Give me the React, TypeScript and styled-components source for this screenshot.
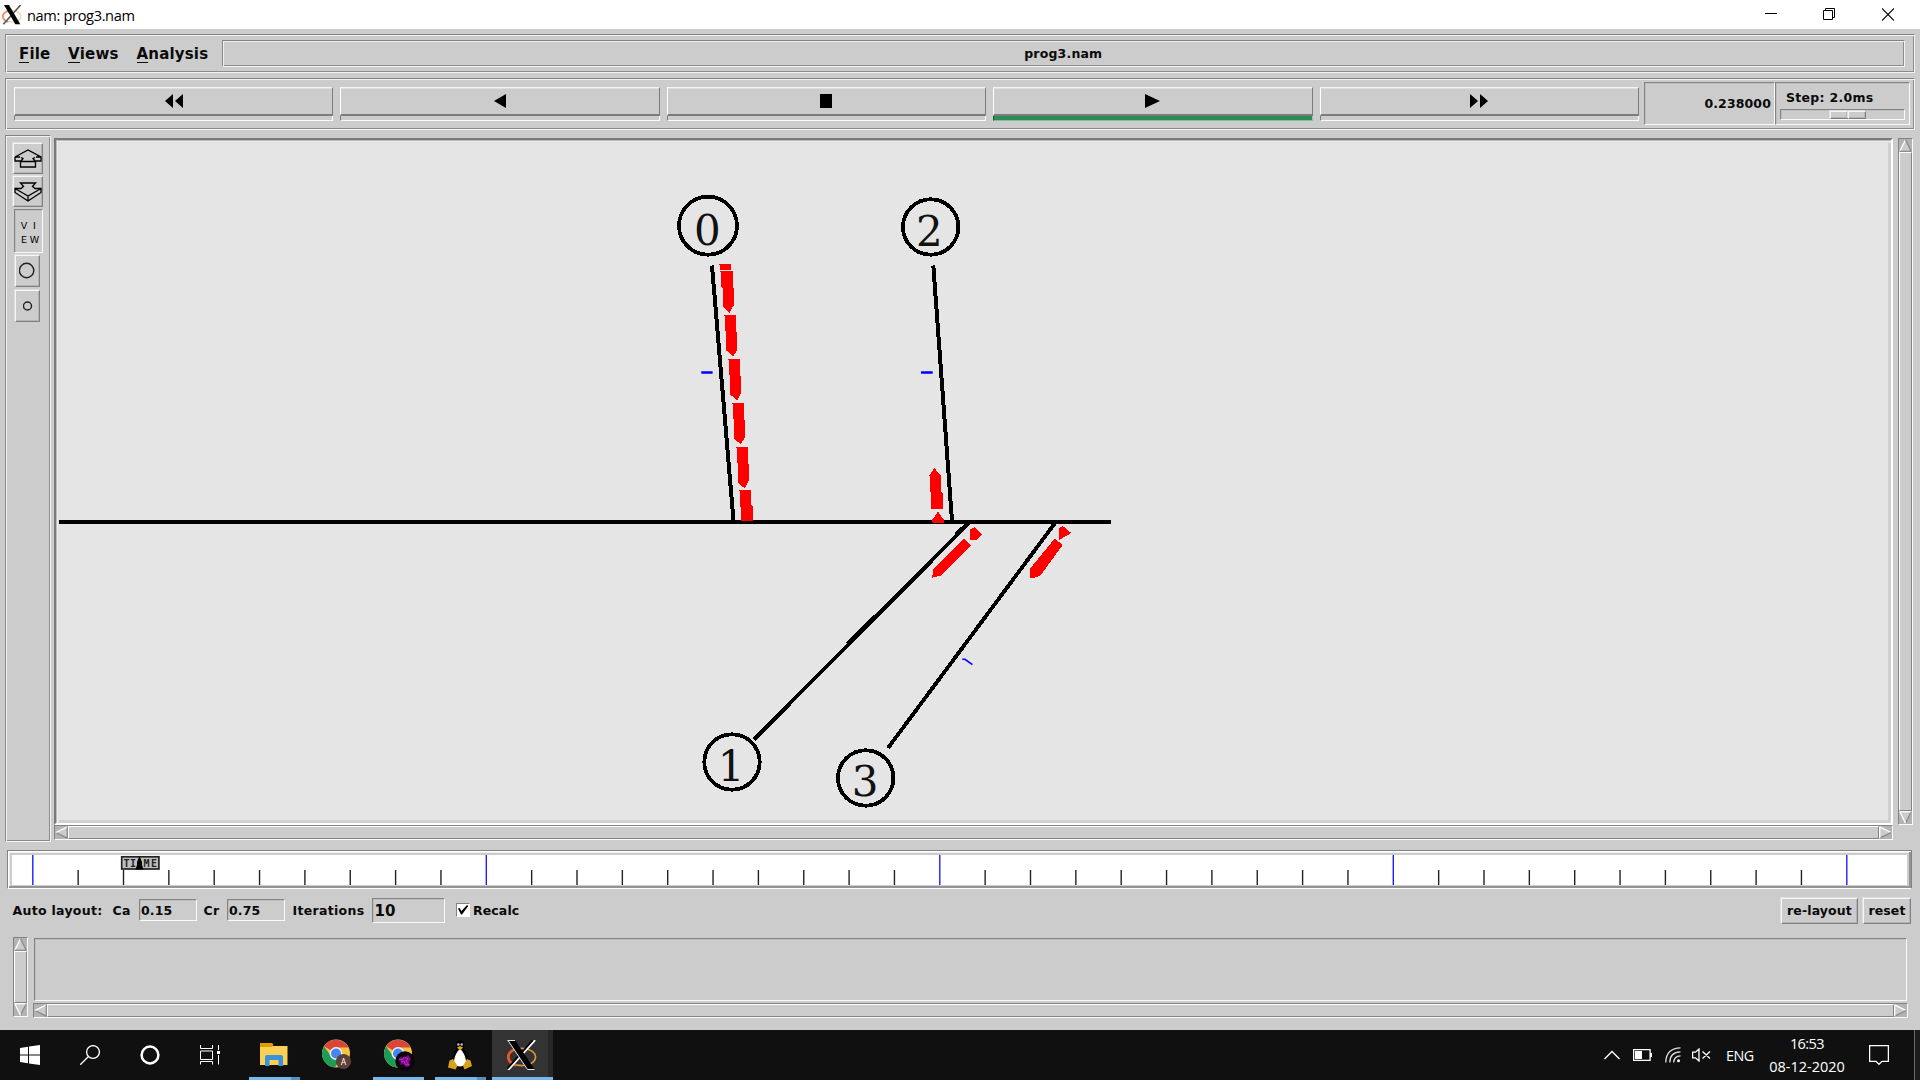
import React from "react";
import styled, { createGlobalStyle, css } from "styled-components";

const Global = createGlobalStyle`
  * { box-sizing: border-box; }
  html, body { margin: 0; padding: 0; overflow: hidden; background: #ccc; }
`;

const groove = css`
  border: 1px solid;
  border-color: #838383 #f4f4f4 #f4f4f4 #8a8a8a;
  box-shadow: inset 1px 1px #f0f0f0, inset -1px -1px #8c8c8c;
`;
const sunken = css`
  border: 1px solid;
  border-color: #838383 #fafafa #fafafa #838383;
  box-shadow: inset 1px 1px #bdbdbd;
`;
const raised = css`
  border: 1px solid;
  border-color: #f6f6f6 #808080 #808080 #f6f6f6;
  box-shadow: inset -1px -1px #b4b4b4, -1px -1px #dedede;
`;

const Screen = styled.div`
  width: 1920px;
  height: 1080px;
  display: flex;
  flex-direction: column;
  background: #ccc;
  color: #0a0a0a;
  font: bold 12.5px "DejaVu Sans", sans-serif;
  white-space: nowrap;
`;
const TitleBar = styled.header`
  height: 29px;
  flex: none;
  display: flex;
  align-items: center;
  background: #fff;
  padding-left: 2px;
  font: 14.6px "Open Sans", "Noto Sans", sans-serif;
  color: #000;
`;
const Caption = styled.span`
  margin-left: 5px;
  flex: 1;
  letter-spacing: -0.35px;
`;
const WindowButtons = styled.div`
  display: flex;
  gap: 47px;
  padding-right: 26px;
`;
const Client = styled.main`
  height: 1001px;
  flex: none;
  display: flex;
  flex-direction: column;
  padding: 5px 5px 0;
`;
const MenuBar = styled.nav`
  ${groove}
  height: 39px;
  display: flex;
  align-items: center;
  padding: 0 9px 0 13px;
  font-size: 15px;
  letter-spacing: 0.18px;
`;
const MenuItem = styled.span<{ $w: number }>`
  width: ${(p) => p.$w}px;
  flex: none;
`;
const Mnemonic = styled.span`
  box-shadow: 0 1px #111;
  display: inline-block;
  line-height: 16px;
`;
const FileName = styled.div`
  ${groove}
  flex: 1;
  height: 27px;
  display: flex;
  align-items: center;
  justify-content: center;
  font-size: 12.5px;
`;
const ControlBar = styled.section`
  ${groove}
  height: 52px;
  margin-top: 5px;
  display: flex;
  padding: 3px 4px 3px 8px;
`;
const Transport = styled.div`
  width: 1625px;
  flex: none;
  display: grid;
  grid-template-columns: repeat(5, 1fr);
  gap: 7px;
  padding-top: 5px;
`;
const TransportCell = styled.div`
  height: 34px;
  display: flex;
  flex-direction: column;
`;
const TransportButton = styled.div`
  height: 29px;
  display: flex;
  align-items: center;
  justify-content: center;
  border: 1px solid;
  border-color: #f4f4f4 #7c7c7c #7c7c7c #fff;
  border-bottom: 2px solid #7c7c7c;
  box-shadow: inset 0 1px #dedede;
`;
const Indicator = styled.div<{ $on?: boolean }>`
  height: 5px;
  background: ${(p) => (p.$on ? "#2e8b57" : "#ccc")};
  border: 1px solid;
  border-top: 0;
  border-color: ${(p) => (p.$on ? "#2e8b57 #8ecfa8 #7fc19a #1d5c39" : "#ccc #fff #fafafa #7c7c7c")};
`;
const Clock = styled.div`
  ${sunken}
  width: 131px;
  flex: none;
  height: 43px;
  margin-left: 5px;
  padding: 0 3px 0 0;
  display: flex;
  align-items: center;
  justify-content: flex-end;
  letter-spacing: 0.12px;
`;
const StepBox = styled.div`
  ${sunken}
  width: 135px;
  flex: none;
  height: 43px;
  padding: 7px 4px 0;
`;
const StepLabel = styled.div`
  padding-left: 6px;
  line-height: 16px;
  margin-bottom: 3px;
  letter-spacing: 0.28px;
`;
const Trough = styled.div`
  ${sunken}
  width: 125px;
  height: 11px;
  display: flex;
  padding: 1px 0 0 49px;
`;
const ThumbHalf = styled.div`
  ${raised}
  width: 18px;
  height: 8px;
`;
const Workspace = styled.section`
  height: 707px;
  margin-top: 5px;
  display: flex;
`;
const ToolColumn = styled.aside`
  ${groove}
  width: 46px;
  display: flex;
  flex-direction: column;
  align-items: center;
  padding: 7px 0 0 0;
`;
const Tool = styled.div<{ $w: number; $h: number; $gap: number; $shift?: number; $in?: boolean }>`
  ${(p) => (p.$in ? sunken : raised)}
  width: ${(p) => p.$w}px;
  height: ${(p) => p.$h}px;
  margin-bottom: ${(p) => p.$gap}px;
  margin-right: ${(p) => p.$shift ?? 0}px;
  display: flex;
  align-items: center;
  justify-content: center;
`;
const ViewWord = styled.div`
  display: grid;
  grid-template-columns: 8px 9px;
  column-gap: 2px;
  justify-items: center;
  font: 9.5px/14px "DejaVu Sans", sans-serif;
  padding: 4px 0 0 3px;
  color: #000;
`;
const Stage = styled.div`
  width: 1839px;
  margin: 3px 0 0 3px;
`;
const CanvasFrame = styled.div`
  height: 687px;
  background: #e5e5e5;
  border: 2px solid;
  border-color: #7a7a7a #fff #fff #7a7a7a;
  box-shadow: inset 1px 1px #bbb, inset 2px 2px #eee, inset 3px 3px #e0e0e0, inset -3px -3px #d0d0d0;
  padding: 3px;
`;
const Network = styled.svg`
  display: block;
  font: 42px "DejaVu Serif", serif;
`;
const ScrollTrack = styled.div<{ $v?: boolean; $len: number }>`
  display: flex;
  flex-direction: ${(p) => (p.$v ? "column" : "row")};
  width: ${(p) => (p.$v ? 15 : p.$len)}px;
  height: ${(p) => (p.$v ? p.$len : 15)}px;
  flex: none;
  background: #b3b3b3;
  border: 1px solid;
  border-color: #838383 #fafafa #fafafa #838383;
`;
const ScrollThumb = styled.div`
  flex: 1;
  background: #ccc;
  border: 1px solid;
  border-color: #fff #838383 #838383 #fff;
`;
const SideScroll = styled.div`
  margin: 3px 0 0 5px;
`;
const Timeline = styled.section`
  width: 1905px;
  height: 39px;
  margin: 8px 0 0 2px;
  border: 1px solid;
  border-color: #838383 #838383 #fff #838383;
  box-shadow: inset 1px 1px #fff, inset -2px -2px #949494, inset 2px 2px #eee;
  padding: 4px 0 0 4px;
  flex: none;
`;
const TimeScale = styled.svg`
  display: block;
  background: #fff;
  font: bold 10px "DejaVu Sans Mono", monospace;
`;
const LayoutRow = styled.section`
  height: 28px;
  margin-top: 7px;
  padding: 0 4px 0 7.5px;
  display: flex;
  align-items: center;
  letter-spacing: 0.12px;
`;
const Label = styled.span<{ $w: number }>`
  width: ${(p) => p.$w}px;
  letter-spacing: 0.3px;
`;
const Field = styled.div<{ $w: number; $big?: boolean; $gap: number }>`
  ${sunken}
  width: ${(p) => p.$w}px;
  height: ${(p) => (p.$big ? 25 : 22)}px;
  font-size: ${(p) => (p.$big ? 15 : 12.5)}px;
  margin-right: ${(p) => p.$gap}px;
  padding: ${(p) => (p.$big ? "1px 0 0 2px" : "0 0 0 1px")};
  display: flex;
  align-items: center;
`;
const CheckBox = styled.div`
  width: 14px;
  height: 14px;
  background: #fff;
  border: 1px solid;
  border-color: #838383 #fff #fff #838383;
  margin-right: 3px;
`;
const Spacer = styled.div`
  flex: 1;
`;
const PushButton = styled.div<{ $w: number }>`
  ${raised}
  width: ${(p) => p.$w}px;
  height: 26px;
  margin: 1px 0 0 5px;
  display: flex;
  align-items: center;
  justify-content: center;
  padding-bottom: 1px;
`;
const Notes = styled.section`
  display: flex;
  margin: 13px 0 0 8px;
  gap: 5px;
`;
const NotesMain = styled.div`
  display: flex;
  flex-direction: column;
  gap: 2px;
`;
const NotesText = styled.div`
  ${sunken}
  width: 1873px;
  height: 63px;
  margin-top: 1px;
  margin-left: 1px;
`;
const TaskBar = styled.footer`
  height: 50px;
  flex: none;
  display: flex;
  background: #101010;
  color: #fff;
  font: 15px "Open Sans", "Noto Sans", sans-serif;
`;
const TaskCell = styled.div<{ $w: number; $pad: number; $bg?: string }>`
  width: ${(p) => p.$w}px;
  height: 50px;
  padding-left: ${(p) => p.$pad}px;
  background: ${(p) => p.$bg ?? "transparent"};
  display: flex;
  align-items: center;
  flex: none;
`;
const RunningCell = styled(TaskCell)<{ $tail?: boolean }>`
  border-bottom: 3px solid #76b9ed;
  padding-top: 3px;
  ${(p) =>
    p.$tail &&
    css`
      border-image: linear-gradient(90deg, #76b9ed 40px, #5a90bf 40px) 3;
      border-width: 0 0 3px 0;
    `}
`;
const Tray = styled.div`
  margin-left: auto;
  display: flex;
  align-items: center;
`;
const TrayIcon = styled.svg<{ $gap: number }>`
  margin-right: ${(p) => p.$gap}px;
  fill: none;
  stroke: #fff;
  stroke-width: 1.3;
`;
const Language = styled.span`
  width: 39px;
  font-size: 14.3px;
  letter-spacing: -0.5px;
`;
const DateTime = styled.div`
  width: 84px;
  text-align: center;
  line-height: 23px;
  font-size: 14.5px;
  letter-spacing: -0.55px;
  margin-right: 20px;
`;
const DateLine = styled.div`
  letter-spacing: 0;
`;
const ShowDesktop = styled.div`
  width: 6px;
  height: 50px;
  border-left: 1px solid #6a6a6a;
  background: #1c1c1c;
`;

const XLogo = ({ size, dark }: { size: number; dark?: boolean }) => (
  <svg width={size} height={size} viewBox="0 0 30 30">
    <ellipse cx="15" cy="17" rx="13.5" ry="8.7" fill="none" stroke={dark ? "#d6943c" : "#f5cf9c"} strokeWidth="1.7" />
    <path d="M13 8.5C4 9 0 14 1.5 19c1 3 4 5.500 8 6.500" fill="none" stroke={dark ? "#e8562a" : "#f08a6c"} strokeWidth="2.600" />
    {dark ? (
      <>
        <path d="M28 0 1 30" fill="none" stroke="#fff" strokeWidth="2.200" />
        <path d="M26 0 0 29" fill="none" stroke="#000" strokeWidth="1.700" />
        <path d="M1 0h7l20 30h-7.500z" fill="#000" />
        <path d="M.5.5H8M27.500 29.500H20.500L1 .5" fill="none" stroke="#e8e8e8" strokeWidth="1" />
      </>
    ) : (
      <>
        <path d="M28 0 2 29" fill="none" stroke="#555" strokeWidth="2.400" />
        <path d="M3 0h7.500l17 29h-7.500z" fill="#000" />
      </>
    )}
  </svg>
);

const edges = {
  up: { rot: 0, a: "#fff", b: "#8a8a8a", c: "#8a8a8a" },
  down: { rot: 180, a: "#8a8a8a", b: "#fff", c: "#fff" },
  left: { rot: 270, a: "#8a8a8a", b: "#fff", c: "#8a8a8a" },
  right: { rot: 90, a: "#fff", b: "#8a8a8a", c: "#fff" },
};

const Arrow = ({ dir }: { dir: keyof typeof edges }) => {
  const e = edges[dir];
  return (
    <svg width="13" height="13" viewBox="0 0 13 13" style={{ flex: "none" }}>
      <g transform={`rotate(${e.rot} 6.5 6.5)`}>
        <path d="M6.500 .8 12.200 12.300H.8z" fill="#ccc" />
        <path d="M6.500 .8 .8 12.300" stroke={e.a} strokeWidth="1.300" />
        <path d="M6.500 .8 12.200 12.300" stroke={e.b} strokeWidth="1.300" />
        <path d="M.8 12.300h11.400" stroke={e.c} strokeWidth="1.300" />
      </g>
    </svg>
  );
};

const Scroll = ({ vertical, length }: { vertical?: boolean; length: number }) => (
  <ScrollTrack $v={vertical} $len={length}>
    <Arrow dir={vertical ? "up" : "left"} />
    <ScrollThumb />
    <Arrow dir={vertical ? "down" : "right"} />
  </ScrollTrack>
);

const glyphs = [
  "M9 0v14L1 7zM19 0v14l-8-7z",
  "M16 0v14L4 7z",
  "M4 0h12v14H4z",
  "M2 0v14l15-7z",
  "M1 0v14l8-7zM11 0v14l8-7z",
];

const nodes = [
  { id: "0", cx: 708, cy: 225.7, r: 29, tx: 707.3, ty: 244.7 },
  { id: "2", cx: 930.7, cy: 227, r: 27.7, tx: 929.3, ty: 246 },
  { id: "1", cx: 732, cy: 762, r: 27.7, tx: 731, ty: 781 },
  { id: "3", cx: 865.7, cy: 778, r: 27.7, tx: 865, ty: 796.3 },
];

const links = [
  { x1: 59, y1: 521.8, x2: 1111, y2: 521.8, w: 3.4 },
  { x1: 712, y1: 265.5, x2: 733.5, y2: 521, w: 4 },
  { x1: 933.3, y1: 265.5, x2: 952, y2: 521, w: 4 },
  { x1: 754, y1: 739.5, x2: 969, y2: 523, w: 3.9 },
  { x1: 888, y1: 748, x2: 1055, y2: 523, w: 3.9 },
];

const Topology = () => (
  <Network width="1829" height="677" viewBox="59 143 1829 677">
    <g stroke="#000" shapeRendering="crispEdges">
      {links.map((l, i) => (
        <line key={i} x1={l.x1} y1={l.y1} x2={l.x2} y2={l.y2} strokeWidth={l.w} />
      ))}
      <path d="M754.500 739 766 727.500M848 644 875 616.500M956 535 968 523.500" strokeWidth="4.600" />
    </g>
    <g fill="#f00" shapeRendering="crispEdges" transform="translate(640 180.3) scale(.33333)">
      <path d="M237 251h37v19h-34v-14z" />
      {[0, 1, 2, 3, 4].map((i) => (
        <path
          key={i}
          transform={`translate(${i * 11.4} ${i * 131.6})`}
          d="M240 273H278V322L281 325V375L268 398 248 379V324L244 320V277Z"
        />
      ))}
      <path d="M296 930H334V975L338 978V1021H304V982L300 978V935Z" />
      <path d="M867 888 883 863 904 888V935L908 938V986H874V938L870 935V888Z" />
      <path d="M877 1025V1018L894 994 911 1018V1027H880Z" />
    </g>
    <g fill="#f00" shapeRendering="crispEdges" transform="translate(640 500) scale(.33333)">
      <path d="M972 116 993 136 902 227 877 233 879 208Z" />
      <path d="M990 88 1004 82 1027 103 1011 120H990Z" />
      <path d="M1244 116 1268 135 1201 227 1185 233H1170V206Z" />
      <path d="M1257 85 1268 78 1294 99 1257 120Z" />
    </g>
    <g stroke="#00f" fill="none">
      <path d="M701.300 372.500h11.300M921 372.500h11.700" strokeWidth="2.600" />
      <path d="M962.300 659.300h2.700l7.400 5.400" strokeWidth="1.600" />
    </g>
    {nodes.map((n) => (
      <g key={n.id}>
        <circle cx={n.cx} cy={n.cy} r={n.r} fill="#e5e5e5" stroke="#000" strokeWidth="3.800" shapeRendering="crispEdges" />
        <text x={n.tx} y={n.ty} textAnchor="middle" fill="#111">
          {n.id}
        </text>
      </g>
    ))}
  </Network>
);

const ticks = Array.from({ length: 41 }, (_, i) => ({ x: 20.8 + i * 45.35, major: i % 10 === 0 }));

const TimeRuler = () => (
  <TimeScale width="1895" height="30" viewBox="0 0 1895 30">
    {ticks.map((t, i) => (
      <path
        key={i}
        d={`M${t.x} ${t.major ? 0 : 15}V30`}
        stroke={t.major ? "#2020f4" : "#222"}
        strokeWidth="1.400"
      />
    ))}
    <rect x="109.700" y="1.800" width="37.200" height="12.200" fill="#bebebe" stroke="#222" strokeWidth="1.700" />
    <text x="111.500" y="11.500" fill="#222" textLength="12.500">TI</text>
    <text x="131.500" y="11.500" fill="#222" textLength="13.500">ME</text>
    <path d="M127.500 1 130 7v3l1.500 4.500h-8L125 10V7z" fill="#000" />
  </TimeScale>
);

const Chrome = ({ badge }: { badge: "letter" | "photo" }) => (
  <svg width="32" height="32" viewBox="0 0 32 32">
    <circle cx="14" cy="14.500" r="14" fill="#f6c445" />
    <path d="M14 14.500 2 7.300A14 14 0 0 1 26.500 8.500H14z" fill="#d9453b" />
    <path d="M2 7.300A14 14 0 0 0 13 28.500L19.500 17.500 14 14.500 8.200 16z" fill="#1c9b59" />
    <circle cx="14" cy="14.500" r="6.400" fill="#f2f2f2" />
    <circle cx="14" cy="14.500" r="5" fill="#4686f2" />
    {badge === "letter" ? (
      <>
        <circle cx="21.500" cy="22.500" r="7.600" fill="#5d4037" />
        <text x="21.500" y="25.600" textAnchor="middle" fill="#fff" fontSize="8.500" fontFamily="Roboto, sans-serif">A</text>
      </>
    ) : (
      <>
        <circle cx="21" cy="22" r="9.700" fill="#0b030d" />
        <path d="M14 21l3-3 3 1 4-3 3 4-2 3 1 4-4 1-3-3-3 1 1-3z" fill="#7a0c82" />
        <path d="M15 20l3 1 2-3 4 2-2 2 3 4-4-1-1-3-3 1" fill="none" stroke="#c828d0" strokeWidth=".9" />
      </>
    )}
  </svg>
);

const Penguin = () => (
  <svg width="24" height="30" viewBox="0 0 24 30">
    <path d="M12 0C8.500 0 8 3 8.200 7 8 11 4 14 3.500 20L8 28h8l4.500-8C20 14 16 11 15.800 7 16 3 15.500 0 12 0z" fill="#000" />
    <path d="M12 9c-3 2-6 8-6 13 2 6 10 6 12 0 0-5-3-11-6-13z" fill="#fff" />
    <circle cx="10.400" cy="4.500" r="1.300" fill="#bbb" />
    <circle cx="13.700" cy="4.500" r="1.300" fill="#bbb" />
    <path d="M9 7.500 12 6l3.200 1.500L12 10.500z" fill="#e0a818" />
    <path d="M1.500 20.500 5 19l4.500 7-2 3.500L0 27.500zM22.500 20.500 19 19l-4 7 1.500 3.500L24 26z" fill="#d9a21b" />
  </svg>
);

export default function App() {
  return (
    <Screen>
      <Global />
      <TitleBar>
        <XLogo size={20} />
        <Caption>nam: prog3.nam</Caption>
        <WindowButtons>
          <svg width="12" height="13" viewBox="0 0 12 13" overflow="visible"><path d="M1 5.500h12" stroke="#000" /></svg>
          <svg width="12" height="13" viewBox="0 0 12 13" fill="none" stroke="#000"><path d="M.5 2.500h9v9h-9zM2.500 2.500v-2h9v9h-2" /></svg>
          <svg width="12" height="13" viewBox="0 0 12 13"><path d="M0 .5l12 12M12 .5l-12 12" stroke="#000" strokeWidth="1.100" /></svg>
        </WindowButtons>
      </TitleBar>
      <Client>
        <MenuBar>
          <MenuItem $w={49}><Mnemonic>F</Mnemonic>ile</MenuItem>
          <MenuItem $w={68.5}><Mnemonic>V</Mnemonic>iews</MenuItem>
          <MenuItem $w={85}><Mnemonic>A</Mnemonic>nalysis</MenuItem>
          <FileName>prog3.nam</FileName>
        </MenuBar>
        <ControlBar>
          <Transport>
            {glyphs.map((d, i) => (
              <TransportCell key={i}>
                <TransportButton>
                  <svg width="20" height="14" viewBox="0 0 20 14"><path d={d} /></svg>
                </TransportButton>
                <Indicator $on={i === 3} />
              </TransportCell>
            ))}
          </Transport>
          <Clock>0.238000</Clock>
          <StepBox>
            <StepLabel>Step: 2.0ms</StepLabel>
            <Trough><ThumbHalf /><ThumbHalf /></Trough>
          </StepBox>
        </ControlBar>
        <Workspace>
          <ToolColumn>
            <Tool $w={30} $h={31} $gap={2}>
              <svg width="28" height="20" viewBox="0 0 28 20" fill="none" stroke="#000" strokeWidth="1.300">
                <path d="M1 8 14 1l13 7v4h-6l-2-2.500 2-1M1 8v4h6l2-2.500-2-1M1 8h5M27 8h-5M6.500 12.500h15v5.500h-15zM9 9.500l-2 3M19 9.500l2 3" />
              </svg>
            </Tool>
            <Tool $w={30} $h={31} $gap={2}>
              <svg width="28" height="20" viewBox="0 0 28 20" fill="none" stroke="#000" strokeWidth="1.300">
                <path d="M1 6.500h6l2.500-2L6.500 1h15l-3 3.500 2.500 2h6v4L14 19 1 10.500zM1 6.500 14 14l13-7.500M14 14v5" />
              </svg>
            </Tool>
            <Tool $w={29} $h={44} $gap={2} $in>
              <ViewWord><span>V</span><span>I</span><span>E</span><span>W</span></ViewWord>
            </Tool>
            <Tool $w={25} $h={32} $gap={3} $shift={1}>
              <svg width="18" height="18" viewBox="0 0 18 18" fill="none" stroke="#222" strokeWidth="1.400"><circle cx="7.600" cy="8.500" r="7.200" /></svg>
            </Tool>
            <Tool $w={25} $h={32} $gap={0} $shift={1}>
              <svg width="10" height="10" viewBox="0 0 10 10" fill="none" stroke="#222" strokeWidth="1.400"><circle cx="4.500" cy="5" r="4" /></svg>
            </Tool>
          </ToolColumn>
          <Stage>
            <CanvasFrame><Topology /></CanvasFrame>
            <Scroll length={1839} />
          </Stage>
          <SideScroll><Scroll vertical length={687} /></SideScroll>
        </Workspace>
        <Timeline><TimeRuler /></Timeline>
        <LayoutRow>
          <Label $w={100}>Auto layout:</Label>
          <Label $w={26.5}>Ca</Label>
          <Field $w={58} $gap={6.5}>0.15</Field>
          <Label $w={23.5}>Cr</Label>
          <Field $w={58} $gap={7.5}>0.75</Field>
          <Label $w={79}>Iterations</Label>
          <Field $w={73} $big $gap={11.5}>10</Field>
          <CheckBox>
            <svg width="12" height="12" viewBox="0 0 12 12"><path d="M1 4.500 2.500 4l2 3L10 1l1.300 1L5 10.500H4z" /></svg>
          </CheckBox>
          <span>Recalc</span>
          <Spacer />
          <PushButton $w={77}>re-layout</PushButton>
          <PushButton $w={48}>reset</PushButton>
        </LayoutRow>
        <Notes>
          <Scroll vertical length={80} />
          <NotesMain>
            <NotesText />
            <Scroll length={1875} />
          </NotesMain>
        </Notes>
      </Client>
      <TaskBar>
        <TaskCell $w={80} $pad={20}>
          <svg width="20" height="20" viewBox="0 0 20 20" fill="#fff"><path d="M0 3 8 1.700V9.500H0zM9 1.500 20 0v9.500H9zM0 10.500h8v7.800L0 17zM9 10.500h11V20L9 18.500z" /></svg>
        </TaskCell>
        <TaskCell $w={60} $pad={0}>
          <svg width="20" height="20" viewBox="0 0 20 20" fill="none" stroke="#fff" strokeWidth="1.300"><circle cx="13" cy="7" r="6.400" /><path d="M8.500 11.500.3 19.700" /></svg>
        </TaskCell>
        <TaskCell $w={60} $pad={0}>
          <svg width="20" height="20" viewBox="0 0 20 20" fill="none" stroke="#fff" strokeWidth="2.500"><circle cx="10" cy="10" r="8.400" /></svg>
        </TaskCell>
        <TaskCell $w={49} $pad={0}>
          <svg width="20" height="20" viewBox="0 0 20 20" fill="none" stroke="#fff"><path d="M.5 0v3.500h12V0M.5 6h12v8.500H.5zM.5 19.500V16.500h12v3M18.500 0v5M18.500 10v9.500" /><path d="M17 6h3v3h-3z" fill="#fff" stroke="none" /></svg>
        </TaskCell>
        <RunningCell $w={51} $pad={11} $tail>
          <svg width="28" height="24" viewBox="0 0 28 24"><path d="M0 1h11l2 2h14.500v19H0z" fill="#fccf55" /><path d="M0 0h12l1.500 1.500L12 4H0z" fill="#df9c05" /><path d="M5 23V14q0-2 2-2h14q2 0 2 2v9h-4.500v-6h-9v6z" fill="#3b92dc" /></svg>
        </RunningCell>
        <TaskCell $w={73} $pad={22}><Chrome badge="letter" /></TaskCell>
        <RunningCell $w={51} $pad={11}><Chrome badge="photo" /></RunningCell>
        <TaskCell $w={11} $pad={0} />
        <RunningCell $w={51} $pad={13} $tail><Penguin /></RunningCell>
        <TaskCell $w={6} $pad={0} />
        <RunningCell $w={56} $pad={15} $bg="#333"><XLogo size={30} dark /></RunningCell>
        <RunningCell $w={5} $pad={0} $bg="#272727" />
        <Tray>
          <TrayIcon $gap={13} width="16" height="10" viewBox="0 0 16 10"><path d="M.5 9 8 1.500 15.500 9" /></TrayIcon>
          <TrayIcon $gap={13} width="19" height="12" viewBox="0 0 19 12"><path d="M.6.6h16.500v10.800H.6zM18.300 4v4" /><path d="M2 2h7v8H2z" fill="#fff" stroke="none" /></TrayIcon>
          <TrayIcon $gap={11} width="16" height="16" viewBox="0 0 16 16"><path d="M.8 15.500C.8 6 6.500.8 15.500.8M4.800 15.500C4.800 8.500 8.500 5 15.500 4.800M8.800 15.500C8.800 11 11 9 15.500 8.800" stroke="#ddd" /><circle cx="13.500" cy="13.800" r="1.500" fill="#fff" stroke="none" /></TrayIcon>
          <TrayIcon $gap={15} width="19" height="14" viewBox="0 0 19 14"><path d="M.6 4.200H3.500L7 1v12L3.500 9.800H.6zM10.500 3.500l7.500 7M18 3.500l-7.500 7" /></TrayIcon>
          <Language>ENG</Language>
          <DateTime>
            <div>16:53</div>
            <DateLine>08-12-2020</DateLine>
          </DateTime>
          <TrayIcon $gap={25} width="20" height="20" viewBox="0 0 20 20"><path d="M.6.6h18.800v15.800H13L10 19.300 7 16.400H.6z" /></TrayIcon>
          <ShowDesktop />
        </Tray>
      </TaskBar>
    </Screen>
  );
}
